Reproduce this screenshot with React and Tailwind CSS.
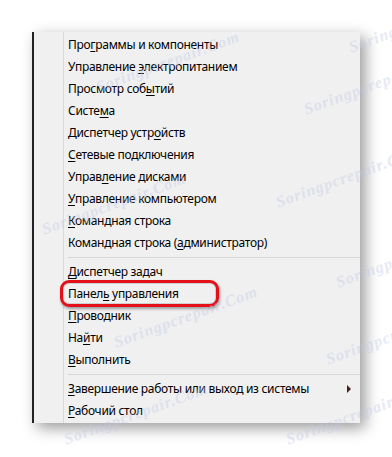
import React from "react";

const items = [
  ["Про", "г", "раммы и компоненты"],
  ["Управление ", "э", "лектропитанием"],
  ["Просмотр соб", "ы", "тий"],
  ["Систе", "м", "а"],
  ["Диспетчер устр", "о", "йств"],
  ["", "С", "етевые подключения"],
  ["Управ", "л", "ение дисками"],
  ["", "У", "правление компьютером"],
  ["", "К", "омандная строка"],
  ["Командная строка (", "а", "дминистратор)"],
  "sep",
  ["", "Д", "испетчер задач"],
  ["Панел", "ь", " управления", "highlight"],
  ["", "П", "роводник"],
  ["На", "й", "ти"],
  ["", "В", "ыполнить"],
  "sep",
  ["", "З", "авершение работы или выход из системы", "sub"],
  ["", "Р", "абочий стол"],
];

// faint watermark stamps over the screenshot
const marks = [
  { left: 92, top: 50 },
  { left: 300, top: 72 },
  { left: 345, top: 10 },
  { left: 38, top: 192 },
  { left: 272, top: 165 },
  { left: 332, top: 245 },
  { left: 110, top: 305 },
  { left: 322, top: 322 },
  { left: 60, top: 402 },
  { left: 282, top: 402 },
];

const Row = ({ item }) => {
  const [before, key, after, extra] = item;
  return (
    <div className="relative flex h-[22px] items-center">
      <span>
        {before}
        <span className="underline underline-offset-[2px]">{key}</span>
        {after}
      </span>
      {extra === "sub" && (
        <span className="ml-auto mr-[9px] h-0 w-0 border-y-[4px] border-l-[4px] border-y-transparent border-l-[#4a1c1c]" />
      )}
      {extra === "highlight" && (
        <div className="pointer-events-none absolute left-[-8px] top-[-3px] h-[27px] w-[159px] rounded-[9px] border-[3px] border-[#e3101a] shadow-[1px_2px_3px_rgba(0,0,0,0.35),inset_0_0_0_1px_#d0d0d0]" />
      )}
    </div>
  );
};

export default function App() {
  return (
    <div className="relative h-[457px] w-[392px] overflow-hidden bg-white font-['Noto_Sans',sans-serif] text-[12px] tracking-[-0.3px] text-black">
      <div className="ml-[32px] mt-[32px] flex h-[391px] w-[328px] border-l-2 border-[#222] bg-[#f0f0f0] shadow-[5px_5px_14px_rgba(0,0,0,0.4)]">
        <div className="w-[29px] shrink-0" />
        <div className="flex-1 border-l border-[#d9d9d9] pl-[4px] pt-[2px]">
          {items.map((item, i) =>
            item === "sep" ? (
              <div key={i} className="flex h-[7px] items-center">
                <div className="h-px w-full bg-[#d8d8d8]" />
              </div>
            ) : (
              <Row key={i} item={item} />
            )
          )}
        </div>
      </div>

      {marks.map((m, i) => (
        <span
          key={i}
          className="pointer-events-none absolute -rotate-[20deg] whitespace-nowrap font-['Liberation_Serif',serif] text-[16px] font-bold italic tracking-[1px] text-[#c3c9e8] opacity-40"
          style={{ left: m.left, top: m.top }}
        >
          Soringpcrepair.Com
        </span>
      ))}
    </div>
  );
}
